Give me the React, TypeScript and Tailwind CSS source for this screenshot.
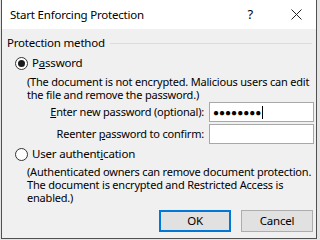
import React from "react";

function Radio({ checked }: { checked?: boolean }) {
  return (
    <span className="flex h-[13px] w-[13px] items-center justify-center rounded-full border border-[#333333] bg-white">
      {checked && <span className="h-[7px] w-[7px] rounded-full bg-[#1a1a1a]" />}
    </span>
  );
}

export default function App() {
  return (
    <div
      className="h-[240px] w-[320px] overflow-hidden whitespace-nowrap bg-[#e4e4e4] text-[11px] tracking-[-0.2px] text-black"
      style={{ fontFamily: '"Noto Sans", "Open Sans", sans-serif' }}
    >
      <div className="ml-[1px] flex h-[239px] w-[316px] flex-col border-x border-b border-[#505050] bg-[#f0f0f0]">
        {/* title bar */}
        <div className="flex h-[29px] shrink-0 items-center bg-white pl-[8px]">
          <span className="text-[11.5px] leading-none">Start Enforcing Protection</span>
          <span className="ml-auto mr-[38px] text-[13px] leading-none">?</span>
          <svg width="11" height="11" viewBox="0 0 11 11" className="mr-[14px]">
            <path d="M0.5 0.5L10.5 10.5M10.5 0.5L0.5 10.5" stroke="#222" strokeWidth="1" />
          </svg>
        </div>

        <div className="flex flex-col pl-[5px] pr-[2px] pt-[7px]">
          <div className="flex h-[14px] items-center">
            <span className="text-[11.5px] leading-[14px]">Protection method</span>
            <span className="ml-[5px] mr-[2px] h-px flex-1 bg-[#dcdcdc]" />
          </div>

          <label className="ml-[8px] mt-[6px] flex h-[14px] items-center gap-[4px]">
            <Radio checked />
            <span className="text-[11.5px] leading-[14px]">
              P<span className="underline">a</span>ssword
            </span>
          </label>
          <p className="ml-[20px] mt-[5px] leading-[13px]">
            (The document is not encrypted. Malicious users can edit
            <br />
            the file and remove the password.)
          </p>

          <div className="mt-[1px] flex items-center justify-end">
            <span className="mr-[5px]">
              <span className="underline">E</span>nter new password (optional):
            </span>
            <div className="flex h-[20px] w-[105px] items-center border border-[#a8a8a8] bg-white pl-[3px]">
              <span className="text-[10px] leading-none tracking-[0px]">●●●●●●●●</span>
              <span className="ml-[1px] h-[13px] w-px bg-black" />
            </div>
          </div>
          <div className="mt-[2px] flex items-center justify-end">
            <span className="mr-[5px]">
              Reenter <span className="underline">p</span>assword to confirm:
            </span>
            <div className="h-[20px] w-[105px] border border-[#a8a8a8] bg-white" />
          </div>

          <label className="ml-[8px] mt-[3px] flex h-[14px] items-center gap-[4px]">
            <Radio />
            <span className="text-[11.5px] leading-[14px]">
              User authent<span className="underline">i</span>cation
            </span>
          </label>
          <p className="ml-[20px] mt-[4px] leading-[13px]">
            (Authenticated owners can remove document protection.
            <br />
            The document is encrypted and Restricted Access is
            <br />
            enabled.)
          </p>

          <div className="mr-[1px] mt-[6px] flex justify-end gap-[10px]">
            <button className="flex h-[22px] w-[72px] items-center justify-center border-2 border-[#0078d7] bg-[#e1e1e1] text-[11.5px]">
              OK
            </button>
            <button className="flex h-[22px] w-[72px] items-center justify-center border border-[#adadad] bg-[#e1e1e1] text-[11.5px]">
              Cancel
            </button>
          </div>
        </div>
      </div>
    </div>
  );
}
